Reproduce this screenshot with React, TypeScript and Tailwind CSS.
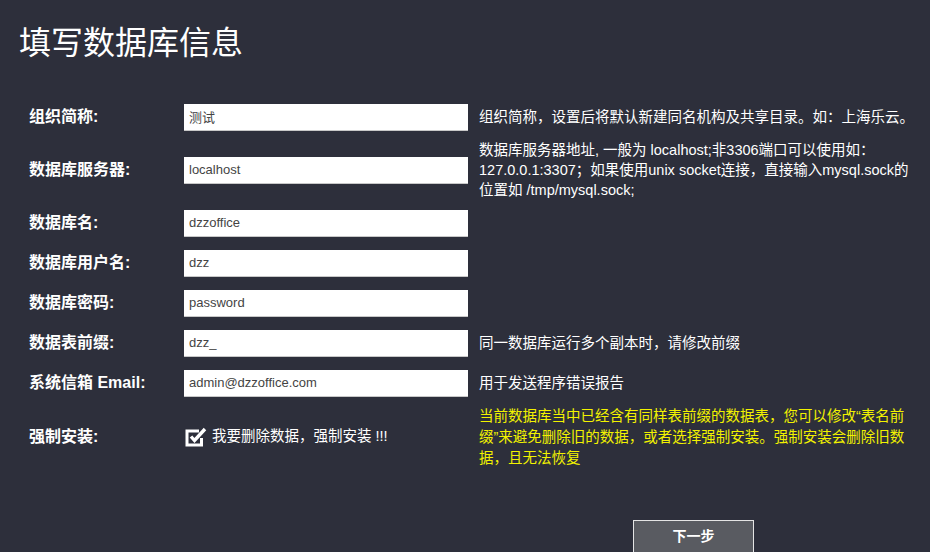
import React from 'react';

const font = { fontFamily: '"Liberation Sans", "Noto Sans CJK SC", sans-serif' };

type Row = {
  label: string;
  value: string;
  help?: string;
  h: string;
};

const rows: Row[] = [
  { label: '组织简称:', value: '测试', help: '组织简称，设置后将默认新建同名机构及共享目录。如：上海乐云。', h: 'h-[40px]' },
  {
    label: '数据库服务器:',
    value: 'localhost',
    help: '数据库服务器地址, 一般为 localhost;非3306端口可以使用如：127.0.0.1:3307；如果使用unix socket连接，直接输入mysql.sock的位置如 /tmp/mysql.sock;',
    h: 'h-[66px]',
  },
  { label: '数据库名:', value: 'dzzoffice', h: 'h-[40px]' },
  { label: '数据库用户名:', value: 'dzz', h: 'h-[40px]' },
  { label: '数据库密码:', value: 'password', h: 'h-[40px]' },
  { label: '数据表前缀:', value: 'dzz_', help: '同一数据库运行多个副本时，请修改前缀', h: 'h-[40px]' },
  { label: '系统信箱 Email:', value: 'admin@dzzoffice.com', help: '用于发送程序错误报告', h: 'h-[40px]' },
];

function CheckIcon() {
  return (
    <svg width="24" height="22" viewBox="0 0 24 22" className="shrink-0">
      <path d="M15 5H3v14h14.5v-7" fill="none" stroke="#fff" strokeWidth="3" />
      <path d="M7 10.5l3.5 4L21 3" fill="none" stroke="#fff" strokeWidth="3.4" strokeLinejoin="miter" />
    </svg>
  );
}

export default function App() {
  return (
    <div className="w-[930px] h-[552px] overflow-hidden bg-[#2d2f3b] text-white" style={font}>
      <div className="h-[97px] pl-[19px] pt-[24px]">
        <h1 className="text-[32px] leading-[38px] font-normal">填写数据库信息</h1>
      </div>

      {rows.map((r) => (
        <div key={r.label} className={`flex items-center ${r.h}`}>
          <div className="w-[184px] pl-[29px] text-[16px] font-bold">{r.label}</div>
          <input
            readOnly
            value={r.value}
            className="w-[284px] h-[27px] bg-white border-b border-[#c8c8c8] pl-[5px] text-[13px] text-[#444] outline-none"
            style={font}
          />
          {r.help && (
            <div className="w-[452px] pl-[11px] text-[14.5px] leading-[20px] whitespace-pre-wrap">{r.help}</div>
          )}
        </div>
      ))}

      <div className="flex items-center h-[68px]">
        <div className="w-[184px] pl-[29px] text-[16px] font-bold">强制安装:</div>
        <label className="w-[284px] flex items-center gap-[4px] text-[14.5px]">
          <CheckIcon />
          <span>我要删除数据，强制安装 !!!</span>
        </label>
        <div className="w-[450px] pl-[11px] text-[14.5px] leading-[21px] text-[#f2f200]">
          当前数据库当中已经含有同样表前缀的数据表，您可以修改“表名前缀”来避免删除旧的数据，或者选择强制安装。强制安装会删除旧数据，且无法恢复
        </div>
      </div>

      <div className="pt-[49px] pl-[633px]">
        <button className="w-[121px] h-[33px] bg-[#595b61] border border-[#e4e4e4] text-[14px] font-bold text-white">
          下一步
        </button>
      </div>
    </div>
  );
}
